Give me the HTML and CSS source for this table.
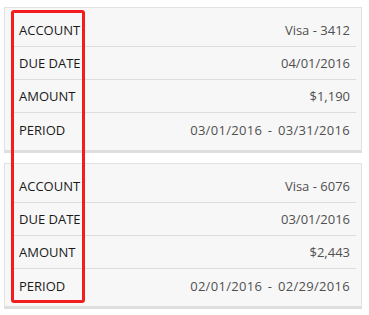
FILE: index.html
```html
<!DOCTYPE html>
<html>
<head>
<meta charset="utf-8">
<link rel="stylesheet" href="styles.css">
</head>
<body>
<div class="page">
  <div class="card">
    <div class="row"><span class="label">ACCOUNT</span><span class="value">Visa - 3412</span></div>
    <div class="row"><span class="label">DUE DATE</span><span class="value">04/01/2016</span></div>
    <div class="row"><span class="label">AMOUNT</span><span class="value">$1,190</span></div>
    <div class="row"><span class="label">PERIOD</span><span class="value range">03/01/2016 - 03/31/2016</span></div>
  </div>
  <div class="card">
    <div class="row"><span class="label">ACCOUNT</span><span class="value">Visa - 6076</span></div>
    <div class="row"><span class="label">DUE DATE</span><span class="value">03/01/2016</span></div>
    <div class="row"><span class="label">AMOUNT</span><span class="value">$2,443</span></div>
    <div class="row"><span class="label">PERIOD</span><span class="value range">02/01/2016 - 02/29/2016</span></div>
  </div>
  <div class="highlight"></div>
</div>
</body>
</html>
```
FILE: styles.css
```css
html, body {
  margin: 0;
  padding: 0;
  background: #ffffff;
}
body {
  font-family: "Open Sans", "Liberation Sans", sans-serif;
  font-size: 13px;
}
.page {
  position: relative;
  display: flex;
  flex-direction: column;
  gap: 10px;
  padding: 7px 7px 0 4px;
  width: 358px;
}
.card {
  background: #f7f7f7;
  border: 1px solid #e2e2e2;
  border-bottom: 3px solid #dedede;
  padding: 6px 5px 4px 9px;
  display: flex;
  flex-direction: column;
}
.row {
  height: 32px;
  display: flex;
  align-items: center;
  justify-content: space-between;
  padding: 0 6px 0 5px;
  border-bottom: 1px solid #dddddd;
}
.row:last-child {
  border-bottom: none;
  height: 33px;
}
.label {
  color: #1a1a1a;
}
.value {
  color: #505050;
}
.range {
  word-spacing: 2px;
  letter-spacing: 0.3px;
}
.highlight {
  position: absolute;
  left: 11px;
  top: 10px;
  width: 68px;
  height: 287px;
  border: 3px solid #f31d1d;
  border-radius: 3px;
}
```
